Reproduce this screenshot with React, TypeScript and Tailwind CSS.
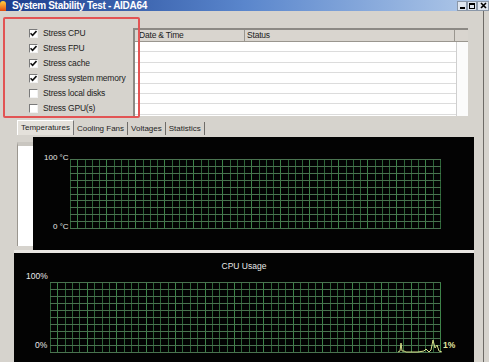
import React from "react";

const font = { fontFamily: "'Liberation Sans', Arial, sans-serif" };

function Grid({ w, h, cols, rows }: { w: number; h: number; cols: number; rows: number }) {
  const vx = Array.from({ length: cols + 1 }, (_, i) => Math.round((i * w) / cols) + 0.5);
  const hy = Array.from({ length: rows + 1 }, (_, i) => Math.round((i * h) / rows) + 0.5);
  return (
    <svg width={w + 1} height={h + 1} className="block">
      {vx.map((x, i) => (
        <line key={"v" + i} x1={x} y1={0} x2={x} y2={h + 1} stroke={i % 4 === 1 ? "#3c8448" : "#2d6538"} strokeWidth={1} />
      ))}
      {hy.map((y, i) => (
        <line key={"h" + i} x1={0} y1={y} x2={w + 1} y2={y} stroke="#4a7350" strokeWidth={1} />
      ))}
    </svg>
  );
}

function Check({ on, label }: { on: boolean; label: string }) {
  return (
    <div className="flex items-center gap-[5px] h-[15px] whitespace-nowrap">
      <div className="w-[9px] h-[9px] shrink-0 bg-white border border-t-[#7a7a7a] border-l-[#7a7a7a] border-b-[#f2f2f2] border-r-[#f2f2f2] flex items-center justify-center">
        {on && (
          <svg width="7" height="7" viewBox="0 0 7 7">
            <path d="M0.5 3.2 L2.6 5.4 L6.5 1" stroke="#111" strokeWidth="1.6" fill="none" />
          </svg>
        )}
      </div>
      <span className="text-[8.5px] tracking-[-0.2px] text-[#222]">{label}</span>
    </div>
  );
}

export default function App() {
  const checks = [
    { on: true, label: "Stress CPU" },
    { on: true, label: "Stress FPU" },
    { on: true, label: "Stress cache" },
    { on: true, label: "Stress system memory" },
    { on: false, label: "Stress local disks" },
    { on: false, label: "Stress GPU(s)" },
  ];
  const tabs = ["Cooling Fans", "Voltages", "Statistics"];

  return (
    <div className="w-[489px] h-[362px] overflow-hidden bg-[#d6d3cd] relative flex flex-col" style={font}>
      {/* title bar */}
      <div className="h-[11px] flex items-center bg-gradient-to-r from-[#1c3c8c] via-[#5a86cc] to-[#b4cbe9] shrink-0">
        <div className="w-[6px] h-[10px] rounded-t-full bg-gradient-to-b from-[#ffd040] to-[#e04a10]" />
        <span className="ml-[6px] text-[10px] font-bold text-white leading-[11px] tracking-[-0.3px] whitespace-nowrap">
          System Stability Test - AIDA64
        </span>
        <div className="ml-auto flex h-[10px]">
          <div className="w-[10px] h-[10px] bg-[#dfe6f0] border border-[#8a97a8] flex items-end justify-center pb-[1px]">
            <div className="w-[5px] h-[2px] bg-black" />
          </div>
          <div className="w-[10px] h-[10px] bg-[#dfe6f0] border border-[#8a97a8] flex items-center justify-center">
            <div className="w-[6px] h-[6px] border border-black border-t-2" />
          </div>
          <div className="w-[12px] h-[10px] bg-[#dfe6f0] border border-[#8a97a8] flex items-center justify-center">
            <svg width="7" height="7" viewBox="0 0 7 7">
              <path d="M1 1 L6 6 M6 1 L1 6" stroke="#000" strokeWidth="1.6" />
            </svg>
          </div>
        </div>
      </div>

      <div className="flex-1 flex">
        <div className="w-[484px] flex flex-col border-r border-[#6d6a66]">
          {/* top section */}
          <div className="h-[107px] flex shrink-0">
            <div className="w-[133px] pl-[29px] pt-[15px] flex flex-col">
              {checks.map((c) => (
                <Check key={c.label} on={c.on} label={c.label} />
              ))}
            </div>
            <div className="mt-[17px] w-[335px] h-[88px] bg-white border-l-2 border-t-2 border-[#8c8984] flex flex-col">
              <div className="h-[12px] flex bg-[#d9d5cf] border-b border-[#9a968f] text-[8.5px] tracking-[-0.2px] text-[#222] leading-[11px]">
                <div className="w-[110px] pl-[4px] border-r border-[#9a968f]">Date &amp; Time</div>
                <div className="w-[210px] pl-[2px] border-r border-[#9a968f]">Status</div>
                <div className="flex-1" />
              </div>
              <div className="flex-1 flex">
                <div className="w-[321px] flex flex-col">
                  {Array.from({ length: 7 }).map((_, i) => (
                    <div key={i} className="h-[10.4px] border-b border-[#dcdcdc]" />
                  ))}
                </div>
                <div className="flex-1 border-l border-[#cfcfcf] bg-[#fbfbfb]" />
              </div>
            </div>
          </div>

          {/* tabs */}
          <div className="h-[19px] pl-[17px] pt-[2px] flex items-start text-[8px] text-[#1e1e1e] shrink-0">
            <div className="h-[15px] px-[3px] bg-[#e4e1db] border-t border-l border-white border-r border-r-[#777] flex items-center">Temperatures</div>
            {tabs.map((t) => (
              <div key={t} className="h-[13px] mt-[2px] px-[3px] border-r border-[#6f6c68] flex items-center">{t}</div>
            ))}
          </div>

          {/* temperature panel */}
          <div className="h-[113px] flex pl-[17px] shrink-0">
            <div className="w-[16px] mt-[5px] mb-[4px] bg-white border-l border-[#9a968f] border-t-4 border-t-[#c9c6c0]" />
            <div className="flex-1 bg-[#030303] relative">
              <div className="absolute left-[11px] top-[17px] text-[8px] text-[#e8e8e8] leading-none">100 °C</div>
              <div className="absolute left-[20px] top-[86px] text-[8px] text-[#e8e8e8] leading-none">0 °C</div>
              <div className="pl-[37px] pt-[22px]">
                <Grid w={370} h={69} cols={51} rows={10} />
              </div>
            </div>
            <div className="w-[9px]" />
          </div>

          {/* separator */}
          <div className="h-[3px] ml-[14px] mr-[9px] bg-[#e9e7e3] shrink-0" />

          {/* CPU usage panel */}
          <div className="flex-1 flex pl-[14px]">
            <div className="flex-1 bg-[#030303] relative">
              <div className="text-center text-[8.5px] text-[#e8e8e8] pt-[9px] leading-none">CPU Usage</div>
              <div className="absolute left-[12px] top-[19px] text-[8.5px] text-[#e8e8e8] leading-none">100%</div>
              <div className="absolute left-[21px] top-[88px] text-[8.5px] text-[#e8e8e8] leading-none">0%</div>
              <div className="absolute left-[429px] top-[88px] text-[8.5px] font-bold text-[#e0e6a0] leading-none">1%</div>
              <div className="pl-[36px] pt-[11px] relative">
                <Grid w={390} h={70} cols={53} rows={10} />
                <svg width="46" height="20" className="absolute left-[384px] top-[63px]">
                  <path
                    d="M0 18 L2 17 L3 9 L4 17 L6 17 L8 18 L20 18 L26 17 L28 15 L30 17 L31 18 L33 16 L35 6 L37 14 L39 11 L41 17 L44 18"
                    stroke="#d7e08a"
                    strokeWidth="1"
                    fill="none"
                  />
                </svg>
              </div>
            </div>
            <div className="w-[9px]" />
          </div>
        </div>
        <div className="flex-1" />
      </div>

      {/* annotation frame */}
      <div className="absolute left-[3px] top-[17px] w-[137px] h-[101px] border-2 border-[#e25454] rounded-[2px]" />
    </div>
  );
}
